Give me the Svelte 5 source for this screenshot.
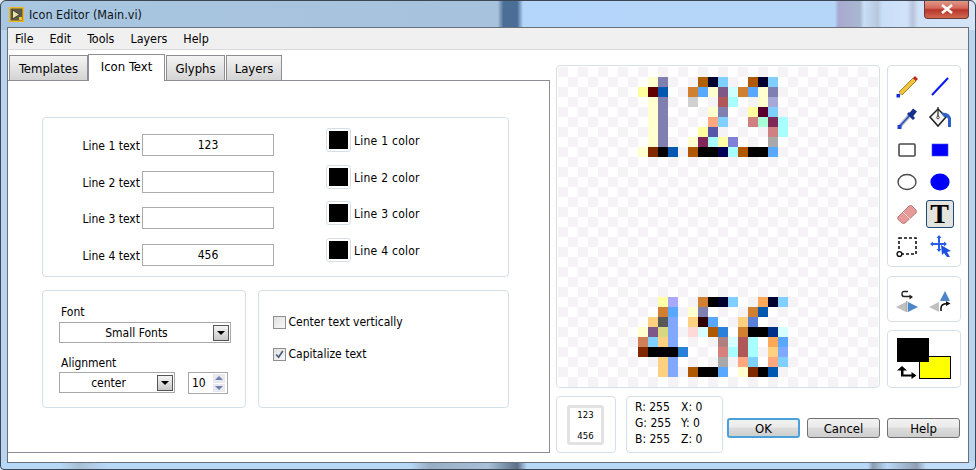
<script>
  const menus = ['File', 'Edit', 'Tools', 'Layers', 'Help'];
  const tabs = [
    { name: 'Templates', width: 79 },
    { name: 'Icon Text', width: 77 },
    { name: 'Glyphs', width: 59 },
    { name: 'Layers', width: 56 }
  ];
  const lines = [
    { label: 'Line 1 text', value: '123', color: 'Line 1 color' },
    { label: 'Line 2 text', value: '', color: 'Line 2 color' },
    { label: 'Line 3 text', value: '', color: 'Line 3 color' },
    { label: 'Line 4 text', value: '456', color: 'Line 4 color' }
  ];

  // painted pixels of the 32x32 icon: [row, first col, colours...]
  const paint = [
    [1, 9, '#ffffd0', '#8080b0'], [1, 14, '#b06000', '#000030', '#80d0ff'], [1, 19, '#b05800', '#000030', '#80d0ff'],
    [2, 8, '#ffffa0', '#600000', '#0058b0'], [2, 13, '#d08030', '#58a8ff', '#ffffd0', '#805888', '#d0ffff', '#d08030', '#58a8ff', '#ffffd0', '#8080b0'],
    [3, 9, '#ffffd0', '#8080b0'], [3, 13, '#d0d0d0'], [3, 16, '#b05858', '#a8ffff'], [3, 20, '#ffffd0', '#a8a8d8'],
    [4, 9, '#ffffd0', '#8080b0'], [4, 15, '#ffffd0', '#8080b0'], [4, 19, '#ffffa0', '#580030', '#80d0ff'],
    [5, 9, '#ffffd0', '#8080b0'], [5, 15, '#ffa880', '#80d0ff'], [5, 19, '#d08080', '#a8ffd8', '#802858', '#a8ffff'],
    [6, 9, '#ffffd0', '#8080b0'], [6, 14, '#ffffa0', '#5858a8'], [6, 21, '#d08080', '#a8ffff'],
    [7, 9, '#ffffd0', '#8080b0'], [7, 13, '#ffffd0', '#802858', '#a8ffff', '#ffffa8', '#8080d8'], [7, 21, '#a8a8a8'],
    [8, 8, '#ffffd0', '#802800', '#000000', '#0058b0'], [8, 13, '#b05800', '#000000', '#000000', '#000058', '#a8ffff', '#b05800', '#000000', '#000000', '#58a8ff'],
    [23, 10, '#ffffa8', '#a8a8ff'], [23, 14, '#d08030', '#000000', '#000030', '#80d0ff'], [23, 20, '#ffa858', '#000030', '#80d0ff'],
    [24, 10, '#d08030', '#58a8ff'], [24, 13, '#ffffd0', '#8080b0'], [24, 19, '#d08030', '#0058b0'],
    [25, 9, '#ffd080', '#585858', '#80a8ff'], [25, 13, '#ffd080', '#300000', '#58a8ff'], [25, 18, '#ffd080', '#5880d8'],
    [26, 8, '#ffffd0', '#805888', '#d8d880', '#80a8ff'], [26, 13, '#ffd8d8', '#d8ffff', '#b05800', '#2880d8'], [26, 18, '#d08030', '#000000', '#000000', '#003088', '#d8ffff'],
    [27, 8, '#d08058', '#80d0ff', '#ffd080', '#80a8ff'], [27, 16, '#b08080', '#d8ffff', '#b05858', '#a8ffff'], [27, 21, '#ffa858', '#58a8ff'],
    [28, 8, '#802800', '#000000', '#000000', '#000000', '#2880d8'], [28, 16, '#d88080', '#a8ffff', '#b05858', '#a8ffff'], [28, 21, '#ffd080', '#80a8ff'],
    [29, 10, '#ffd080', '#80a8ff'], [29, 16, '#a8a8a8'], [29, 18, '#ffa880', '#80d0ff'], [29, 21, '#ffa880', '#80d0ff'],
    [30, 10, '#ffd080', '#80a8ff'], [30, 13, '#b05800', '#000000', '#000000', '#58a8ff'], [30, 18, '#ffffd0', '#802800', '#000000', '#0058b0']
  ];

  const painted = {};
  for (const [row, col, ...colours] of paint) {
    colours.forEach((c, i) => { painted[row * 32 + col + i] = c; });
  }
  const cells = Array.from({ length: 1024 }, (_, i) => {
    const checker = (Math.floor(i / 32) + i % 32) % 2 === 0 ? '#f5f3f5' : '#ffffff';
    return painted[i] || checker;
  });
</script>

<div class="window">
  <div class="titlebar">
    <svg class="appicon" width="15" height="15" viewBox="0 0 15 15">
      <rect x="0.75" y="0.75" width="13.5" height="13.5" fill="#5a5a48" stroke="#f0b820" stroke-width="1.5" />
      <path d="M3.5 3 L10.5 7.5 L3.5 12 Z" fill="#e8e0a8" stroke="#26261e" stroke-width="0.7" />
      <rect x="10" y="10" width="3" height="3" fill="#f0c830" />
    </svg>
    <span class="title">Icon Editor (Main.vi)</span>
    <div class="close">
      <svg width="14" height="10" viewBox="0 0 14 10">
        <path d="M2 1 L12 9 M12 1 L2 9" stroke="#fff" stroke-width="2.6" />
      </svg>
    </div>
  </div>

  <div class="client">
    <div class="menubar">
      {#each menus as m}<span>{m}</span>{/each}
    </div>

    <div class="content">
      <div class="left">
        <div class="tabs">
          {#each tabs as t, i}
            <div class="tab" class:active={i === 1} style="width:{t.width}px">{t.name}</div>
          {/each}
        </div>
        <div class="panel">
          <div class="group lines">
            <div class="line-inputs">
              {#each lines as l}
                <div class="line-row">
                  <span class="line-label">{l.label}</span>
                  <div class="field">{l.value}</div>
                </div>
              {/each}
            </div>
            <div class="line-colors">
              {#each lines as l}
                <div class="color-row">
                  <div class="swatch"><div></div></div>
                  <span>{l.color}</span>
                </div>
              {/each}
            </div>
          </div>

          <div class="lower">
            <div class="group fontbox">
              <div class="cap">Font</div>
              <div class="select wide">
                <span>Small Fonts</span>
                <i class="drop"></i>
              </div>
              <div class="cap second">Alignment</div>
              <div class="align-row">
                <div class="select narrow">
                  <span>center</span>
                  <i class="drop"></i>
                </div>
                <div class="spin">
                  <span>10</span>
                  <div class="arrows"><i class="up"></i><i class="down"></i></div>
                </div>
              </div>
            </div>
            <div class="group optbox">
              <label class="opt"><i class="check"></i>Center text vertically</label>
              <label class="opt"><i class="check">
                <svg width="11" height="11" viewBox="0 0 11 11"><path d="M2.2 5.5 L4.6 8.2 L8.8 2" fill="none" stroke="#4a5a78" stroke-width="1.7" /></svg>
              </i>Capitalize text</label>
            </div>
          </div>
        </div>
      </div>

      <div class="right">
        <div class="top">
          <div class="group canvas">
            <div class="pixels">
              {#each cells as c}<div style="background:{c}"></div>{/each}
            </div>
          </div>
          <div class="side">
            <div class="group tools">
              <div class="tool">
                <svg width="24" height="24" viewBox="0 0 24 24">
                  <path d="M4 18 L18 4 L21 7 L7 21 Z" fill="#f2c438" stroke="#8a6a20" stroke-width="0.8" />
                  <path d="M18 4 L20 2 L23 5 L21 7 Z" fill="#c02828" />
                  <path d="M4 18 L7 21 L3 22 Z" fill="#e8c8a0" />
                  <rect x="1.5" y="20" width="3.5" height="3.5" fill="#1030e0" />
                </svg>
              </div>
              <div class="tool">
                <svg width="24" height="24" viewBox="0 0 24 24">
                  <path d="M4 21 L20 4" stroke="#0818f0" stroke-width="2" />
                </svg>
              </div>
              <div class="tool">
                <svg width="24" height="24" viewBox="0 0 24 24">
                  <path d="M5 20 L15 9" stroke="#b8bcc8" stroke-width="4" />
                  <path d="M5 20 L15 9" stroke="#3050c0" stroke-width="1.6" />
                  <path d="M13 7 L19 13" stroke="#16308c" stroke-width="3" />
                  <path d="M16 9 L20 4" stroke="#16308c" stroke-width="5" />
                  <rect x="2.5" y="19" width="4" height="4" fill="#2040d0" />
                </svg>
              </div>
              <div class="tool">
                <svg width="24" height="24" viewBox="0 0 24 24">
                  <path d="M2 11 L10 3 L18 11 L10 20 Z" fill="#f4f4f4" stroke="#222" stroke-width="1.5" />
                  <path d="M10 1 L10 11" stroke="#222" stroke-width="1.2" />
                  <circle cx="10" cy="11.5" r="1.3" fill="#fff" stroke="#222" stroke-width="0.8" />
                  <path d="M13 7 Q21 6 23 12 L23 21 L20 21 L20 13 Q19 10 16 11 Z" fill="#2c62c8" />
                </svg>
              </div>
              <div class="tool">
                <svg width="24" height="24" viewBox="0 0 24 24">
                  <rect x="4" y="6" width="16" height="12" rx="1" fill="#fff" stroke="#4a4a4a" stroke-width="1.6" />
                </svg>
              </div>
              <div class="tool">
                <svg width="24" height="24" viewBox="0 0 24 24">
                  <rect x="4" y="6" width="16" height="12" fill="#0000fa" stroke="#4050f0" stroke-width="0.6" />
                </svg>
              </div>
              <div class="tool">
                <svg width="24" height="24" viewBox="0 0 24 24">
                  <ellipse cx="12" cy="12" rx="9" ry="7.5" fill="#fff" stroke="#4a4a4a" stroke-width="1.4" />
                </svg>
              </div>
              <div class="tool">
                <svg width="24" height="24" viewBox="0 0 24 24">
                  <ellipse cx="12" cy="12" rx="9.6" ry="8.4" fill="#0000fa" />
                </svg>
              </div>
              <div class="tool">
                <svg width="24" height="24" viewBox="0 0 24 24">
                  <path d="M3 15 L14 4 Q15.5 3 17 4 L21 8 Q22 9.5 21 11 L10 21 Q8.5 22 7 21 L3.5 18 Q2 16.5 3 15 Z" fill="#e89a98" stroke="#a86a68" stroke-width="0.8" />
                  <path d="M8 10 L15 17" stroke="#f8d8d4" stroke-width="1" />
                </svg>
              </div>
              <div class="tool">
                <div class="t-on">T</div>
              </div>
              <div class="tool">
                <svg width="24" height="24" viewBox="0 0 24 24">
                  <rect x="4" y="4" width="17" height="16" fill="none" stroke="#111" stroke-width="1.6" stroke-dasharray="3 2" />
                  <circle cx="4.5" cy="20" r="2.4" fill="#fff" stroke="#111" stroke-width="1.4" />
                </svg>
              </div>
              <div class="tool">
                <svg width="24" height="24" viewBox="0 0 24 24">
                  <path d="M11 1 L13.5 4 H12 V9 H16 V7.5 L19 10 L16 12.5 V11 H12 V15 H13.5 L11 18 L8.5 15 H10 V11 H5 V12.5 L2 10 L5 7.5 V9 H10 V4 H8.5 Z" fill="#2a5ce8" />
                  <path d="M13 11 L23 17 L19 18 L22 23 L19 23 L16 19 L14 21 Z" fill="#1c50e0" />
                </svg>
              </div>
            </div>

            <div class="group flips">
              <div class="tool">
                <svg width="24" height="24" viewBox="0 0 24 24">
                  <path d="M11 12 L11 22 L1 17 Z" fill="#c0c0c0" />
                  <rect x="11.2" y="11" width="1.2" height="11" fill="#999" />
                  <path d="M13 12 L13 22 L23 17 Z" fill="#4c86c8" />
                  <path d="M16 6.5 L9 6.5 Q7 6.5 7 4 Q7 1.5 9 1.5 L13 1.5" fill="none" stroke="#222" stroke-width="1.4" />
                  <path d="M14.5 4.5 L18 7 L14.5 9.5 Z" fill="#222" />
                </svg>
              </div>
              <div class="tool">
                <svg width="24" height="24" viewBox="0 0 24 24">
                  <path d="M11 12 L11 22 L1 17 Z" fill="#c0c0c0" />
                  <path d="M12 11 L22 11 L17 1 Z" fill="#4c86c8" />
                  <path d="M13 21 L13 18 Q13 14 19 13.5" fill="none" stroke="#111" stroke-width="1.6" />
                  <path d="M18 11 L22.5 13.5 L18 16 Z" fill="#111" />
                </svg>
              </div>
            </div>

            <div class="group colors">
              <div class="fgbg">
                <div class="bg"></div>
                <div class="fg"></div>
                <svg width="21" height="14" viewBox="0 0 21 14">
                  <path d="M6 0 L11 4.5 H7.5 V8.5 H15.5 V6 L20.5 9.5 L15.5 13 V10.5 H5 V4.5 H1 Z" fill="#000" />
                </svg>
              </div>
            </div>
          </div>
        </div>

        <div class="bottom">
          <div class="group preview">
            <div class="mini">
              <span>123</span>
              <span>456</span>
            </div>
          </div>
          <div class="group readout">
            <span>R: 255</span><span>X: 0</span>
            <span>G: 255</span><span>Y: 0</span>
            <span>B: 255</span><span>Z: 0</span>
          </div>
          <div class="buttons">
            <button class="ok">OK</button>
            <button>Cancel</button>
            <button>Help</button>
          </div>
        </div>
      </div>
    </div>
  </div>
</div>

<style>
  :global(body) {
    margin: 0;
    background: #dfe8f0;
  }

  .window {
    box-sizing: border-box;
    width: 976px;
    height: 470px;
    display: flex;
    flex-direction: column;
    padding: 0 6px 6px 6px;
    border: 1px solid #3c4654;
    border-radius: 6px 6px 4px 4px;
    /* blurred desktop showing through the glass frame */
    background:
      linear-gradient(90deg, #a9c6e0 0%, #a6c2dc 51%, #4a6e96 51.6%, #4a6e96 53%, #b4d6fa 53.6%, #b6d6f8 85.6%, #a8a8d0 86%, #a8b8d0 88.2%, #c8dff8 88.6%, #b8c8dc 90%, #c8dff8 90.5%, #d0e2f8 93%, #b8c4dc 93.6%, #d0e2f8 94.2%, #d4e4f6 100%) top / 100% 29px no-repeat,
      linear-gradient(90deg, #b8d8f8 0%, #b8d8f8 6%, #a8c0d4 8%, #b8d8f8 11%, #b8d8f8 42%, #98aec4 44%, #a8c0d8 50%, #5c7088 53%, #b8d8f8 54%, #b8d8f8 89%, #8c9eb0 89.5%, #b8d8f8 91%, #90a0b4 94%, #c0dcf8 95%) bottom / 100% 8px no-repeat,
      #b8d4ee;
    font-family: "DejaVu Sans Condensed", "DejaVu Sans", sans-serif;
    font-size: 12px;
    color: #000;
    overflow: hidden;
  }

  .titlebar {
    height: 26px;
    flex: none;
    display: flex;
    align-items: center;
    position: relative;
  }

  .appicon {
    margin: 1px 5px 0 2px;
  }

  .title {
    font-size: 12.5px;
    margin-top: 1px;
    color: #0c1420;
  }

  .close {
    position: absolute;
    right: 0;
    top: -1px;
    width: 45px;
    height: 19px;
    display: flex;
    align-items: center;
    justify-content: center;
    border: 1px solid #6c3a36;
    border-top: none;
    border-radius: 0 0 4px 4px;
    box-sizing: border-box;
    background: linear-gradient(#e2a090 0%, #d4685a 45%, #b8362c 55%, #d06a50 100%);
  }

  .client {
    flex: 1;
    display: flex;
    flex-direction: column;
    min-height: 0;
    background: #fff;
    border: 1px solid #6a7078;
  }

  .menubar {
    height: 21px;
    flex: none;
    display: flex;
    align-items: center;
    gap: 16px;
    padding-left: 7px;
    background: #f0f0f0;
    border-bottom: 1px solid #d8d8d8;
    font-size: 12.4px;
  }

  .content {
    flex: 1;
    display: flex;
    min-height: 0;
  }

  .left {
    width: 542px;
    flex: none;
    display: flex;
    flex-direction: column;
  }

  .tabs {
    height: 30px;
    flex: none;
    display: flex;
    align-items: flex-end;
    padding-left: 1px;
    position: relative;
    z-index: 1;
  }

  .tab {
    box-sizing: border-box;
    height: 25px;
    display: flex;
    align-items: center;
    justify-content: center;
    margin-right: 1px;
    border: 1px solid #8c8e94;
    border-bottom: none;
    background: linear-gradient(#f4f4f4, #d4d4d4);
    font-size: 13px;
  }

  .tab.active {
    height: 27px;
    margin-bottom: -1px;
    padding-bottom: 3px;
    background: #fff;
    margin-left: -1px;
  }

  .panel {
    box-sizing: border-box;
    height: 373px;
    border: 1px solid #8c8e94;
    border-left: none;
    padding: 36px 40px 0 34px;
  }

  .group {
    box-sizing: border-box;
    border: 1px solid #d5dfe8;
    border-radius: 4px;
    background: #fff;
  }

  .lines {
    height: 160px;
    display: flex;
    padding: 10px 0 0 0;
  }

  .line-inputs {
    width: 231px;
    padding-top: 6px;
    display: flex;
    flex-direction: column;
    gap: 14.7px;
  }

  .line-row {
    display: flex;
    align-items: center;
    justify-content: flex-end;
    gap: 3px;
  }

  .line-label {
    padding-top: 2px;
    margin-right: -1px;
  }

  .field {
    box-sizing: border-box;
    width: 132px;
    height: 22px;
    border: 1px solid #acacac;
    display: flex;
    align-items: center;
    justify-content: center;
  }

  .line-colors {
    margin-left: 52px;
    display: flex;
    flex-direction: column;
    gap: 12.7px;
  }

  .color-row {
    display: flex;
    align-items: center;
    gap: 3px;
  }

  .color-row span {
    padding-top: 2px;
    letter-spacing: 0.25px;
  }

  .swatch {
    box-sizing: border-box;
    width: 25px;
    height: 24px;
    padding: 2px;
    border: 1px solid #d5dfe8;
    border-radius: 3px;
  }

  .swatch div {
    width: 19px;
    height: 18px;
    background: #000;
  }

  .lower {
    display: flex;
    gap: 12px;
    margin-top: 13px;
  }

  .fontbox {
    width: 204px;
    height: 118px;
    padding: 14px 0 0 17px;
  }

  .cap {
    line-height: 15px;
    margin-bottom: 2px;
    margin-left: 1px;
  }

  .cap.second {
    margin-top: 13px;
    margin-bottom: 1px;
  }

  .select {
    box-sizing: border-box;
    height: 21px;
    border: 1px solid #a8a8a8;
    display: flex;
    align-items: center;
    position: relative;
    margin-left: -1px;
  }

  .select span {
    flex: 1;
    text-align: center;
  }

  .select.wide {
    width: 172px;
  }

  .select.narrow {
    width: 116px;
  }

  .drop {
    box-sizing: border-box;
    width: 16px;
    height: 16px;
    margin-right: 1px;
    border: 1px solid #555;
    background: linear-gradient(#f4f4f4, #c8c8c8);
    position: relative;
  }

  .drop::after {
    content: '';
    position: absolute;
    left: 3px;
    top: 5px;
    border-left: 4px solid transparent;
    border-right: 4px solid transparent;
    border-top: 4px solid #000;
  }

  .align-row {
    display: flex;
    align-items: flex-start;
    gap: 13px;
  }

  .spin {
    box-sizing: border-box;
    width: 40px;
    height: 22px;
    border: 1px solid #a8a8a8;
    display: flex;
    align-items: center;
    justify-content: space-between;
    padding: 0 2px 0 3px;
  }

  .arrows {
    width: 12px;
    height: 18px;
    display: flex;
    flex-direction: column;
    gap: 1px;
  }

  .arrows i {
    flex: 1;
    background: #e8e8ee;
    position: relative;
  }

  .arrows i::after {
    content: '';
    position: absolute;
    left: 2px;
    top: 2px;
    border-left: 4px solid transparent;
    border-right: 4px solid transparent;
  }

  .arrows .up::after {
    border-bottom: 4px solid #6f7fb0;
  }

  .arrows .down::after {
    border-top: 4px solid #6f7fb0;
  }

  .optbox {
    width: 252px;
    height: 118px;
    padding: 23px 0 0 14px;
    display: flex;
    flex-direction: column;
    gap: 16px;
  }

  .opt {
    display: flex;
    align-items: center;
    gap: 3px;
    line-height: 16px;
  }

  .check {
    box-sizing: border-box;
    width: 13px;
    height: 13px;
    border: 1px solid #8e8f8f;
    background: linear-gradient(135deg, #e0e0e0, #f8f8f8);
    display: block;
    line-height: 0;
  }

  .right {
    flex: 1;
    padding: 15px 0 0 6px;
    min-width: 0;
  }

  .top {
    display: flex;
    gap: 7px;
  }

  .canvas {
    width: 324px;
    height: 323px;
    padding: 1px;
    background: #fff;
  }

  .pixels {
    display: grid;
    grid-template-columns: repeat(32, 10px);
    grid-auto-rows: 10px;
  }

  .side {
    width: 74px;
    display: flex;
    flex-direction: column;
    gap: 9px;
  }

  .tools {
    height: 202px;
    display: grid;
    grid-template-columns: 33px 33px;
    grid-auto-rows: 32px;
    padding: 4px 0 0 2px;
  }

  .tool {
    display: flex;
    align-items: center;
    justify-content: center;
  }

  .t-on {
    box-sizing: border-box;
    width: 28px;
    height: 28px;
    border: 1px solid #1c4a78;
    border-radius: 3px;
    background: #e4e4de;
    display: flex;
    align-items: center;
    justify-content: center;
    font-family: "Liberation Serif", serif;
    font-weight: bold;
    font-size: 28px;
    line-height: 1;
  }

  .flips {
    height: 46px;
    display: grid;
    grid-template-columns: 33px 33px;
    padding: 6px 0 0 2px;
    margin-bottom: -1px;
  }

  .colors {
    height: 58px;
    padding: 7px 0 0 9px;
  }

  .fgbg {
    position: relative;
    width: 54px;
    height: 42px;
  }

  .bg {
    position: absolute;
    left: 22px;
    top: 18px;
    width: 32px;
    height: 23px;
    box-sizing: border-box;
    background: #ffff00;
    border: 1px solid #000;
  }

  .fg {
    position: absolute;
    left: 0;
    top: 0;
    width: 32px;
    height: 24px;
    background: #000;
  }

  .fgbg svg {
    position: absolute;
    left: -1px;
    top: 28px;
  }

  .bottom {
    display: flex;
    margin-top: 8px;
  }

  .preview {
    width: 60px;
    height: 57px;
    padding: 8px 0 0 10px;
  }

  .mini {
    box-sizing: border-box;
    width: 37px;
    height: 40px;
    border: 3px solid #e2e2e2;
    border-radius: 3px;
    display: flex;
    flex-direction: column;
    justify-content: space-between;
    align-items: center;
    font-size: 9.5px;
    line-height: 11px;
    padding: 1px 0;
  }

  .readout {
    width: 97px;
    height: 57px;
    margin-left: 10px;
    display: grid;
    grid-template-columns: 46px auto;
    grid-auto-rows: 16px;
    padding: 2px 0 0 8px;
    font-size: 12px;
    line-height: 16px;
  }

  .buttons {
    display: flex;
    gap: 7px;
    margin: 22px 0 0 4px;
  }

  button {
    box-sizing: border-box;
    width: 73px;
    height: 20px;
    padding: 0;
    border: 1px solid #707070;
    border-radius: 3px;
    background: linear-gradient(#f2f2f2 0%, #ebebeb 45%, #dcdcdc 50%, #cfcfcf 100%);
    font: inherit;
    font-size: 13px;
    color: #000;
  }

  button.ok {
    border: 2px solid #4aa0d8;
  }
</style>
